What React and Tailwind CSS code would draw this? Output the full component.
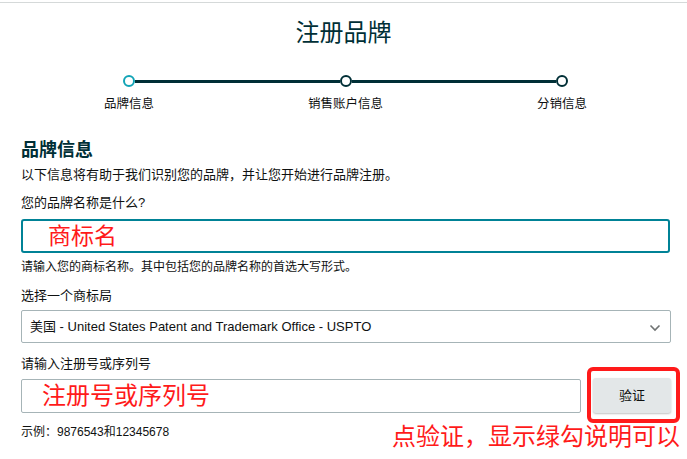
import React from "react";

const font = { fontFamily: '"Liberation Sans", "Noto Sans CJK SC", sans-serif' };

export default function App() {
  return (
    <div className="relative w-[687px] h-[459px] overflow-hidden bg-white pt-[2px] text-[#0f1111]" style={font}>
      <div className="border-t border-[#d5d9d9]">
        <h1 className="mt-[14px] text-center text-[24px] leading-[32px] text-[#002f36]">注册品牌</h1>

        {/* Stepper */}
        <div className="mt-[26px] ml-[123px] flex w-[445px] items-center">
          <div className="h-[12px] w-[12px] shrink-0 rounded-full border-2 border-[#12a4b6] bg-white" />
          <div className="h-[3px] flex-1 bg-[#002f36]" />
          <div className="h-[12px] w-[12px] shrink-0 rounded-full border-2 border-[#002f36] bg-white" />
          <div className="h-[3px] flex-1 bg-[#002f36]" />
          <div className="h-[12px] w-[12px] shrink-0 rounded-full border-2 border-[#002f36] bg-white" />
        </div>
        <div className="mt-[8px] ml-[79px] flex w-[533px] justify-between text-[12.5px] leading-[18px] text-[#0f1111]">
          <span className="w-[100px] text-center">品牌信息</span>
          <span className="w-[100px] text-center">销售账户信息</span>
          <span className="w-[100px] text-center">分销信息</span>
        </div>

        {/* Form */}
        <div className="ml-[21px] w-[650px]">
          <h2 className="mt-[25px] text-[18px] font-bold leading-[24px] text-[#002f36]">品牌信息</h2>
          <p className="mt-[4px] text-[13px] leading-[18px]">以下信息将有助于我们识别您的品牌，并让您开始进行品牌注册。</p>

          <p className="mt-[10px] text-[13px] leading-[18px]">您的品牌名称是什么?</p>
          <div className="mt-[7px] flex h-[34px] w-[649px] items-center rounded-[3px] border-2 border-[#008296] pl-[25px] text-[23px] leading-none text-[#ff1a1a]">
            商标名
          </div>
          <p className="mt-[6px] text-[12px] leading-[16px]">请输入您的商标名称。其中包括您的品牌名称的首选大写形式。</p>

          <p className="mt-[12px] text-[13px] leading-[18px]">选择一个商标局</p>
          <div className="mt-[5px] flex h-[33px] w-[650px] items-center justify-between rounded-[2px] border border-[#a6b4b7] pl-[8px] pr-[9px]">
            <span className="text-[13px] text-[#0f1111]">美国 - United States Patent and Trademark Office - USPTO</span>
            <svg width="12" height="8" viewBox="0 0 12 8" className="mt-[2px]">
              <polyline points="1.5,1.5 6,6 10.5,1.5" fill="none" stroke="#6f7373" strokeWidth="1.6" />
            </svg>
          </div>

          <p className="mt-[12px] text-[13px] leading-[18px]">请输入注册号或序列号</p>
          <div className="mt-[5px] flex items-end gap-[12px]">
            <div className="flex h-[34px] w-[560px] items-center rounded-[2px] border border-[#a6b4b7] pl-[20px] text-[24px] leading-none text-[#ff1a1a]">
              注册号或序列号
            </div>
            <button className="h-[35px] w-[78px] rounded-[3px] bg-[#e3e7e8] text-[13px] text-[#0f1111] shadow-[0_1px_2px_rgba(15,17,17,0.25)]">
              验证
            </button>
          </div>
          <p className="mt-[11px] text-[12px] leading-[16px]">示例：9876543和12345678</p>
        </div>
      </div>

      {/* Annotations */}
      <div className="pointer-events-none absolute left-[587px] top-[367px] h-[56px] w-[93px] rounded-[6px] border-4 border-[#ff1a1a]" />
      <div className="absolute left-[392px] top-[422px] text-[24px] leading-[30px] text-[#ff1a1a]">点验证，显示绿勾说明可以</div>
    </div>
  );
}
